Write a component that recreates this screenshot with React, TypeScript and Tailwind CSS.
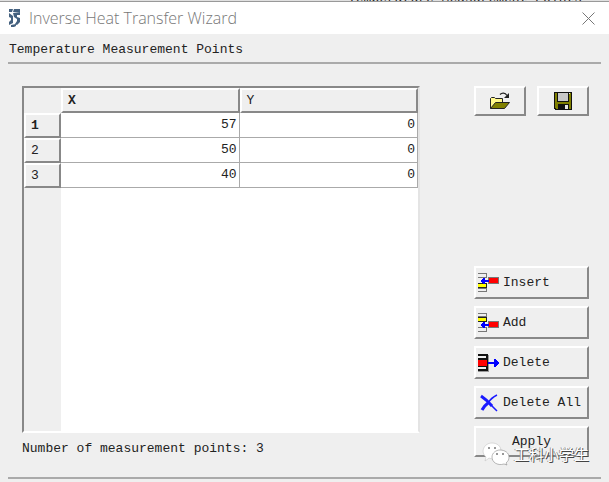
import type { ReactNode } from 'react';

const POINTS = [
  { x: 57, y: 0 },
  { x: 50, y: 0 },
  { x: 40, y: 0 },
];

const RAISED = 'border-2 border-t-white border-l-white border-r-[#888] border-b-[#888] bg-[#efefef]';

function LogoIcon() {
  return (
    <svg width="14" height="20" viewBox="0 0 14 20" className="shrink-0" fill="#44617f" aria-hidden="true">
      <path d="M1 1h4l-1 3H1zM1 5l4 3v7l-4 2v-3l2-2v-2L1 9z" />
      <path d="M6 1h6v3L9 4H5zM5 5l7-1v3L9 7v2l3 1v4l-3 3-2-1 2-3v-2L6 9zM3 17l5-1v2l-2 1H3z" />
    </svg>
  );
}

function OpenIcon() {
  return (
    <svg width="20" height="18" viewBox="0 0 20 18" aria-hidden="true">
      <path d="M.5 16.5v-10l1-1h3l1 1h7v4" fill="#fff88a" stroke="#222" />
      <path d="M.5 16.5l5-6h14l-5 6z" fill="#808000" stroke="#222" />
      <path d="M10 2.5c2-2 5-2 7 1" fill="none" stroke="#222" strokeWidth="1.3" />
      <path d="M19 1v5h-5z" fill="#222" />
    </svg>
  );
}

function SaveIcon() {
  return (
    <svg width="18" height="18" viewBox="0 0 18 18" shapeRendering="crispEdges" aria-hidden="true">
      <path d="M0 0h18v18H1l-1-1z" fill="#111" />
      <path d="M1 1h16v16H2l-1-1z" fill="#808000" />
      <path d="M3 0h12v10H3z" fill="#111" />
      <path d="M4 1h10v8H4z" fill="#c8c8c8" />
      <path d="M4 12h11v6H4z" fill="#111" />
      <path d="M11 13h3v4h-3zM15 1h1v1h-1z" fill="#e8e8e8" />
    </svg>
  );
}

function InsertIcon() {
  return (
    <svg width="21" height="20" viewBox="0 0 21 20" shapeRendering="crispEdges" aria-hidden="true">
      <path d="M0 0h9v5H0V4h8V1H0zM0 15h9v4H0v-1h8v-2H0z" fill="#777" />
      <path d="M0 10h9v5H0z" fill="#222" />
      <path d="M0 11h8v3H0z" fill="#ffff00" />
      <path d="M10 4h11v7H10z" fill="#777" />
      <path d="M11 5h9v5h-9z" fill="#f00" />
      <path d="M3 7h8v2H3zM5 5h2v6H5zM4 6h3v4H4z" fill="#00f" />
    </svg>
  );
}

function AddIcon() {
  return (
    <svg width="21" height="20" viewBox="0 0 21 20" shapeRendering="crispEdges" aria-hidden="true">
      <path d="M0 0h9v4H0V3h8V1H0zM0 14h9v5H0v-1h8v-3H0z" fill="#777" />
      <path d="M0 4h9v5H0z" fill="#222" />
      <path d="M0 5h8v3H0z" fill="#ffff00" />
      <path d="M10 8h11v7H10z" fill="#777" />
      <path d="M11 9h9v5h-9z" fill="#f00" />
      <path d="M3 11h8v2H3zM5 9h2v6H5zM4 10h3v4H4z" fill="#00f" />
    </svg>
  );
}

function DeleteIcon() {
  return (
    <svg width="21" height="20" viewBox="0 0 21 20" shapeRendering="crispEdges" aria-hidden="true">
      <path d="M0 2h11v17H0v-1h9V3H0z" fill="#999" />
      <path d="M0 1h10v17H0v-2h8v-2H0V5h8V3H0z" fill="#111" />
      <path d="M0 7h9v6H0z" fill="#f00" />
      <path d="M10 9h6V6h1l4 4-4 4h-1v-3h-6z" fill="#00f" />
    </svg>
  );
}

function DeleteAllIcon() {
  return (
    <svg width="21" height="20" viewBox="0 0 21 20" fill="none" stroke="#1a1aff" aria-hidden="true">
      <path d="M3 3q6 4 11 10" strokeWidth="3" />
      <path d="M13 12l6 6M19 2Q13 5 10 10" strokeWidth="1.5" />
      <path d="M10 10Q6 13 4 17" strokeWidth="3" />
    </svg>
  );
}

function ActionButton({ icon, label }: { icon: ReactNode; label: string }) {
  return (
    <button type="button" className={`flex h-[33px] w-full items-center gap-1 pl-0.5 ${RAISED}`}>
      {icon}
      <span className="whitespace-nowrap">{label}</span>
    </button>
  );
}

function Watermark() {
  return (
    <div className="pointer-events-none absolute top-4 left-2 flex items-center gap-1">
      <svg width="28" height="24" viewBox="0 0 28 24" aria-hidden="true">
        <path d="M10 1c5 0 9 3 9 8s-4 8-9 8l-3-1-4 3 1-4C-2 10 2 1 10 1z" fill="#fff" stroke="#bbb" strokeWidth=".5" />
        <path d="M18 8c5 0 9 3 9 7 0 3-1 4-3 6l1 2-3-1c-7 2-12-2-12-7 0-4 4-7 8-7z" fill="#fff" stroke="#888" strokeWidth=".6" />
        <path d="M6 6h2M12 6h2M14 12h2M20 12h2" stroke="#777" strokeWidth="1.5" />
      </svg>
      <span className="font-['Noto_Sans_CJK_SC',sans-serif] text-[15px] leading-5 whitespace-nowrap text-white [text-shadow:1px_1px_0_#444,-1px_0_0_#999]">
        工科小学生
      </span>
    </div>
  );
}

export default function App() {
  return (
    <div className="flex min-h-screen flex-col bg-[#efefef] font-['Liberation_Mono',monospace] text-[13px] leading-4 text-[#222]">
      {/* Edge of the window behind */}
      <div className="flex h-0.5 items-end overflow-hidden border-b border-[#999] bg-[#e0e0e0] pl-[348px] whitespace-nowrap" aria-hidden="true">
        <span className="-mb-1.5">Temperature Measurement Points</span>
      </div>

      <header className="flex h-8 items-center bg-white pr-3 pl-2">
        <LogoIcon />
        <h1 className="ml-[7px] flex-1 font-['Open_Sans',sans-serif] text-[16px] leading-6 font-light text-[#777]">
          Inverse Heat Transfer Wizard
        </h1>
        <button type="button" aria-label="Close" className="p-0.5">
          <svg width="13" height="13" viewBox="0 0 13 13" stroke="#777" aria-hidden="true">
            <path d="M.5.5l12 12M12.5.5l-12 12" />
          </svg>
        </button>
      </header>

      <h2 className="mx-2 border-b-2 border-[#aaa] pt-2 pb-1 pl-px">Temperature Measurement Points</h2>

      <main className="flex flex-1 gap-[54px] pt-[22px] pr-5 pb-5 pl-[22px]">
        <section className="flex min-w-0 flex-1 flex-col">
          <div className="flex-1 border-2 border-t-[#888] border-r-[#e4e4e4] border-b-white border-l-[#888] bg-[linear-gradient(to_right,#efefef_37px,white_37px)]">
            <table className="w-full table-fixed border-separate border-spacing-0">
              <thead>
                <tr className="h-[25px] text-left">
                  <td className="w-[37px] bg-[#efefef]" />
                  <th scope="col" className={`pl-[5px] font-bold ${RAISED}`}>X</th>
                  <th scope="col" className={`pl-[5px] font-normal ${RAISED}`}>Y</th>
                </tr>
              </thead>
              <tbody>
                {POINTS.map((point, i) => (
                  <tr key={i} className="h-[25px] text-right">
                    <th scope="row" className={`pl-[5px] text-left ${i === 0 ? 'font-bold' : 'font-normal'} ${RAISED}`}>
                      {i + 1}
                    </th>
                    <td className="border-r border-b border-[#aaa] bg-white pr-0.5">{point.x}</td>
                    <td className="border-r border-b border-[#aaa] bg-white pr-0.5">{point.y}</td>
                  </tr>
                ))}
              </tbody>
            </table>
          </div>
          <p className="pt-2">Number of measurement points: {POINTS.length}</p>
        </section>

        <aside className="flex w-[115px] flex-col justify-between">
          <div className="flex justify-between">
            <button type="button" aria-label="Open" className={`flex h-[30px] w-[52px] items-center justify-center ${RAISED}`}>
              <OpenIcon />
            </button>
            <button type="button" aria-label="Save" className={`flex h-[30px] w-[52px] items-center justify-center ${RAISED}`}>
              <SaveIcon />
            </button>
          </div>
          <div className="flex flex-col gap-[7px]">
            <ActionButton icon={<InsertIcon />} label="Insert" />
            <ActionButton icon={<AddIcon />} label="Add" />
            <ActionButton icon={<DeleteIcon />} label="Delete" />
            <ActionButton icon={<DeleteAllIcon />} label="Delete All" />
            <div className="relative">
              <button type="button" className={`h-[31px] w-full ${RAISED}`}>Apply</button>
              <Watermark />
            </div>
          </div>
        </aside>
      </main>

      <hr className="mx-2 mb-[3px] border-t-2 border-[#aaa]" />
    </div>
  );
}
